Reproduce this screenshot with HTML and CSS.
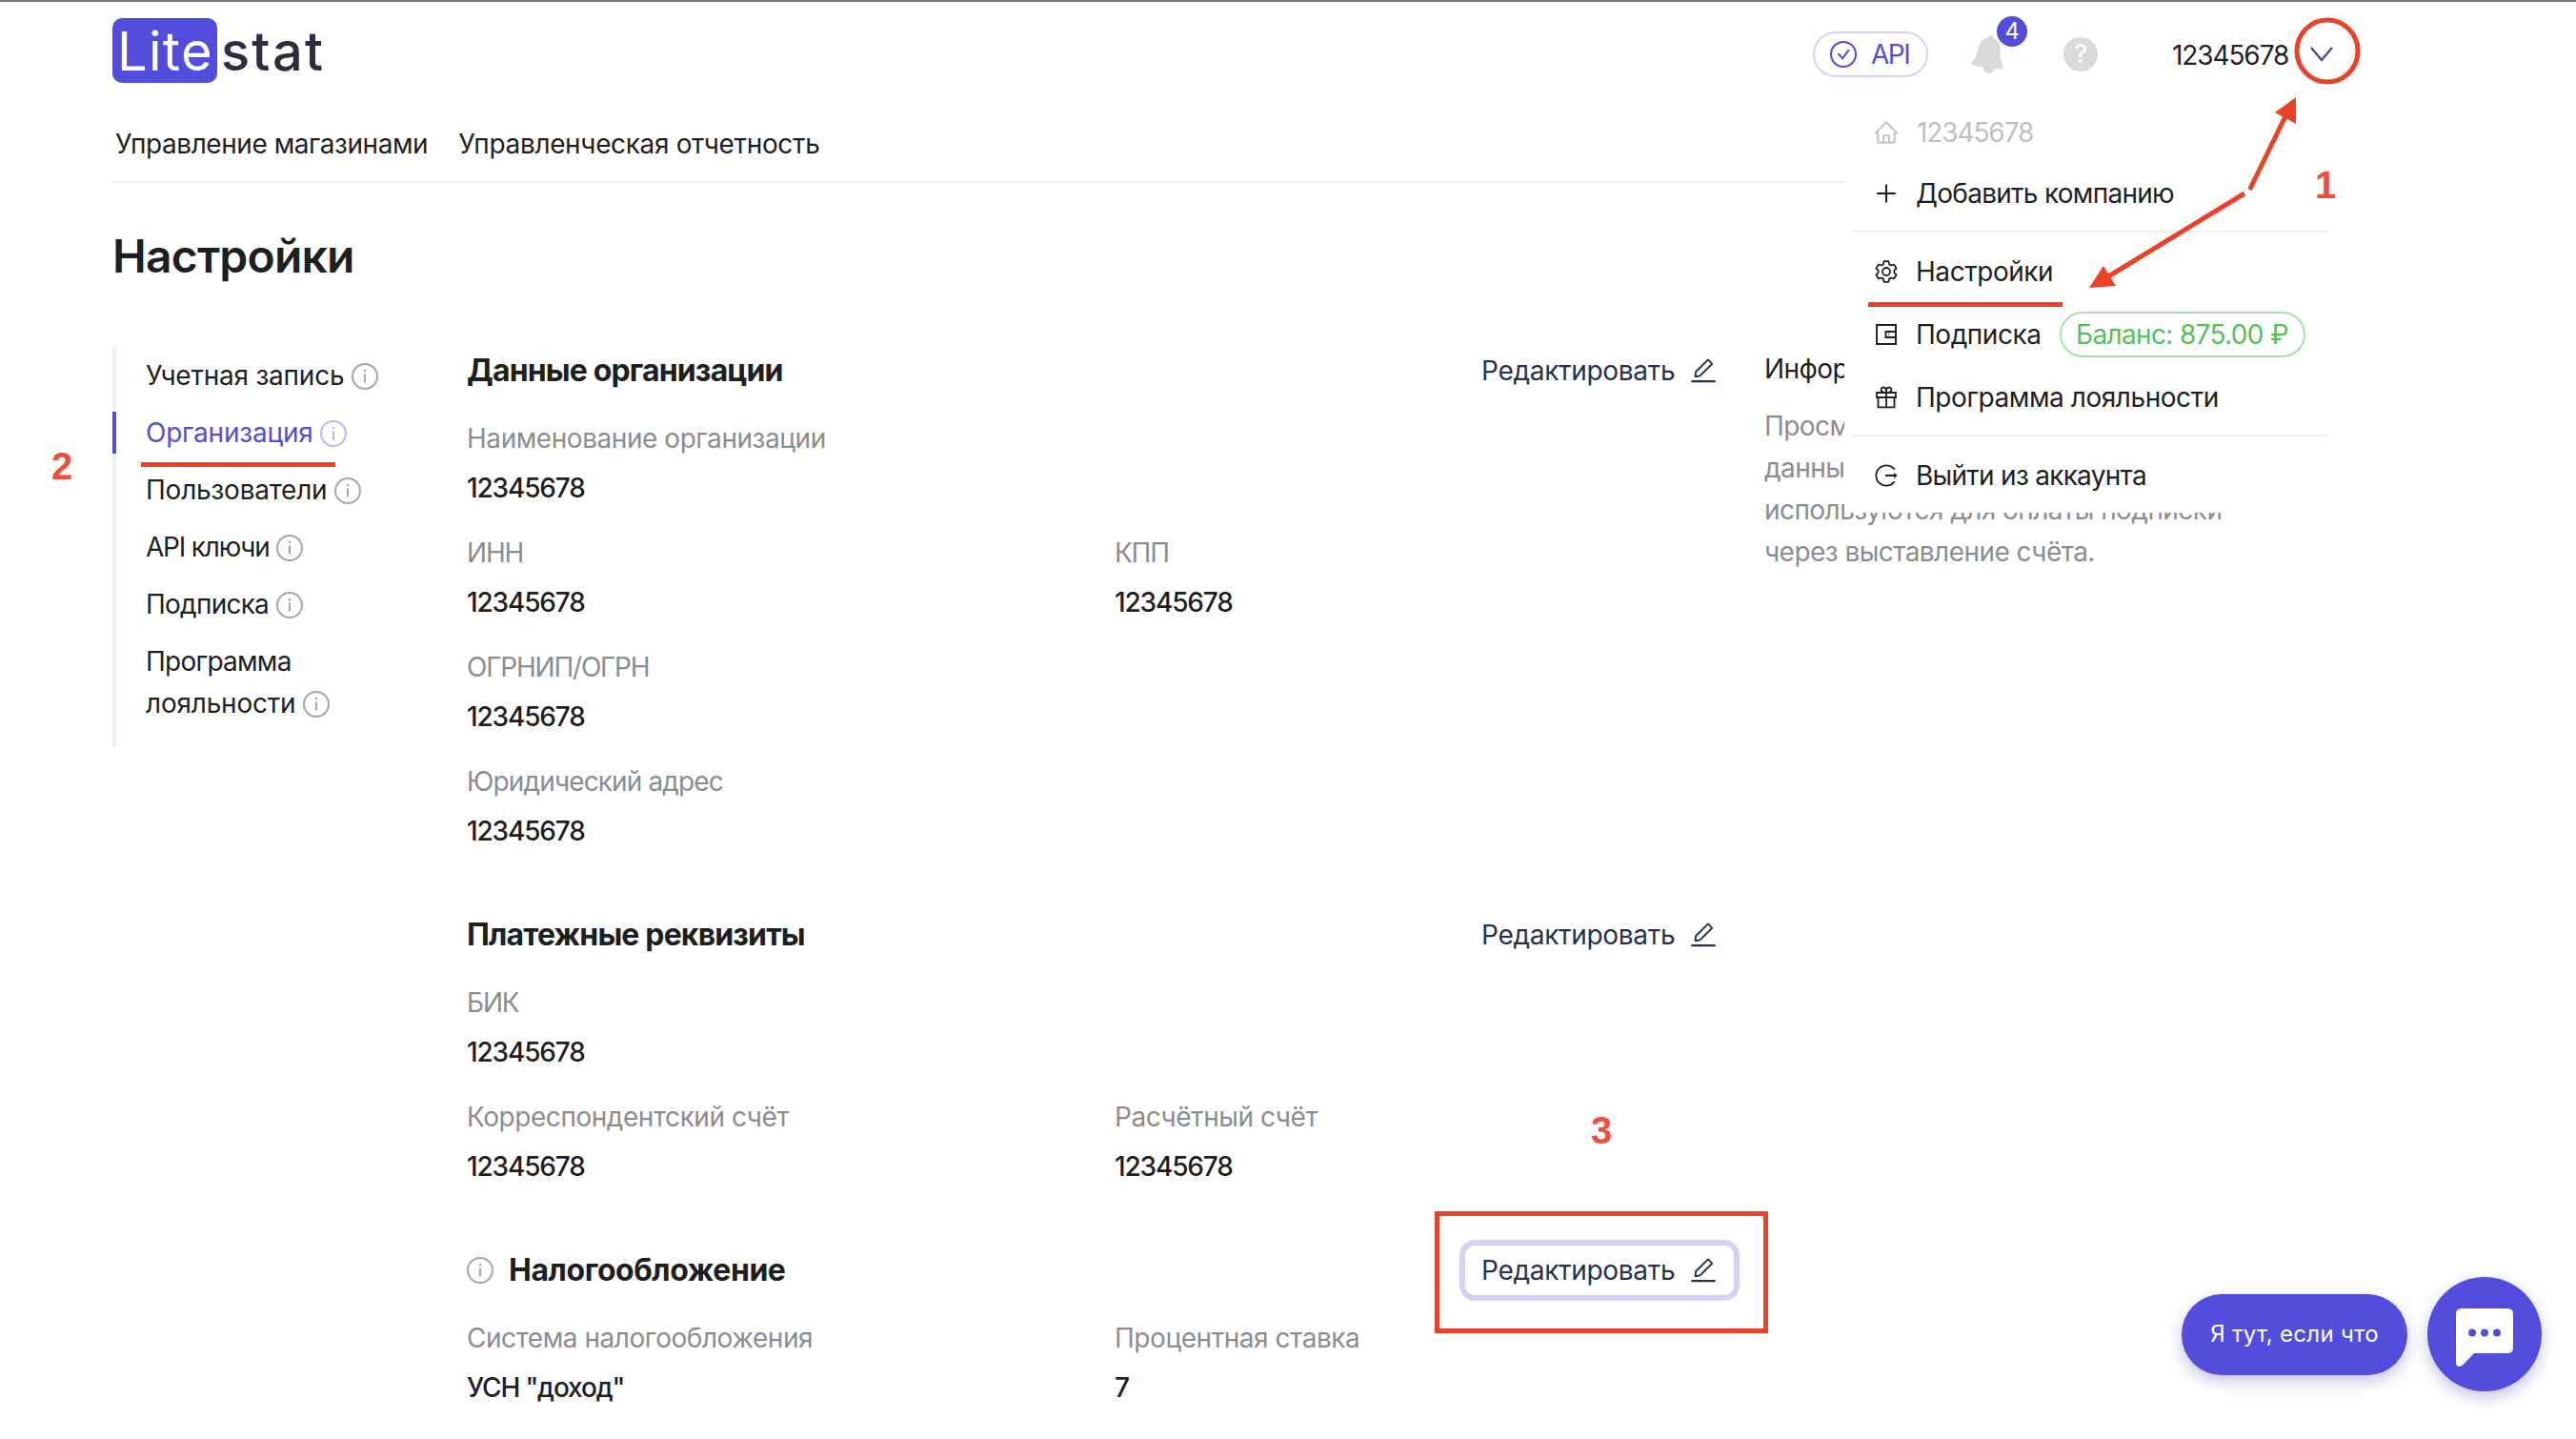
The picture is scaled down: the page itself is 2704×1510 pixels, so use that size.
FILE: index.html
```html
<!DOCTYPE html>
<html lang="ru">
<head>
    <meta charset="utf-8">
    <title>Настройки</title>
    <link rel="stylesheet" href="styles.css">
</head>
<body>
    <svg class="sprite">
        <symbol id="info" viewBox="0 0 28 28">
            <circle cx="14" cy="14" r="13" fill="none" stroke="currentColor" stroke-width="2"/>
            <path d="M14 11.5V20.5" stroke="currentColor" stroke-width="2"/>
            <circle cx="14" cy="8" r="1.3" fill="currentColor"/>
        </symbol>
        <symbol id="edit" viewBox="0 0 26 26">
            <path d="M1.2 24.2H24.8" stroke="currentColor" stroke-width="2.2" stroke-linecap="round"/>
            <path d="M5 14.2L18 1.4L22.3 5.8L9.4 18.4L4.6 19.2Z" fill="none" stroke="currentColor" stroke-width="1.9" stroke-linejoin="round"/>
        </symbol>
    </svg>

    <header class="header">
        <div class="header-top">
            <div class="logo"><span class="logo-lite">Lite</span><span class="logo-stat">stat</span></div>
            <div class="header-right">
                <div class="api">
                    <svg class="api-icon" viewBox="0 0 28 28" fill="none" stroke="currentColor" stroke-width="2">
                        <circle cx="14" cy="14" r="13"/>
                        <path d="M8.6 13.2L13 18.3L20 9.2"/>
                    </svg>
                    <span>API</span>
                </div>
                <div class="bell">
                    <svg width="34" height="40" viewBox="0 0 34 40" fill="#d9d9d9">
                        <path d="M20.5 0.3C22.3 0.3 23.4 1.6 23.2 3.6C28.2 5.4 30.6 9.2 30.6 14.2C30.6 21 30.4 25.5 32.4 29.2C34 31.4 33.6 34.4 31.4 35.4C24 34.8 8.5 33.2 1.5 31.2C-0.4 29.8 0.3 27.4 2.2 26.4C5.6 24 6.3 18.5 8.2 11.8C9.6 6.8 13 3.5 17.8 3.1C18.1 1.3 19 0.3 20.5 0.3Z"/>
                        <path d="M12.5 33C12.6 37 15 40 18.6 40C22 40 24 37.5 24.8 34.5Z"/>
                    </svg>
                    <span class="badge">4</span>
                </div>
                <div class="help">?</div>
                <div class="user">12345678</div>
                <svg class="chevron" viewBox="0 0 24 16" fill="none" stroke="#45507d" stroke-width="2.4">
                    <path d="M1 1L12 14L23 1"/>
                </svg>
            </div>
        </div>
        <nav class="nav">
            <a>Управление магазинами</a>
            <a class="wide">Управленческая отчетность</a>
        </nav>
    </header>

    <main class="page">
        <h1>Настройки</h1>
        <div class="content">
            <aside class="sidebar">
                <a>Учетная запись <svg class="info"><use href="#info"/></svg></a>
                <a class="active">Организация <svg class="info"><use href="#info"/></svg></a>
                <a>Пользователи <svg class="info"><use href="#info"/></svg></a>
                <a><span class="narrow">API ключи</span> <svg class="info"><use href="#info"/></svg></a>
                <a><span class="snug">Подписка</span> <svg class="info"><use href="#info"/></svg></a>
                <a><span class="snug">Программа</span><br>лояльности <svg class="info"><use href="#info"/></svg></a>
            </aside>

            <div class="sections">
                <section>
                    <div class="section-head">
                        <h2>Данные организации</h2>
                        <button class="edit">Редактировать <svg><use href="#edit"/></svg></button>
                    </div>
                    <div class="fields">
                        <div class="field full"><label>Наименование организации</label><b>12345678</b></div>
                        <div class="field"><label class="caps">ИНН</label><b>12345678</b></div>
                        <div class="field"><label class="caps">КПП</label><b>12345678</b></div>
                        <div class="field full"><label class="caps">ОГРНИП/ОГРН</label><b>12345678</b></div>
                        <div class="field full"><label class="snug">Юридический адрес</label><b>12345678</b></div>
                    </div>
                </section>

                <section>
                    <div class="section-head">
                        <h2>Платежные реквизиты</h2>
                        <button class="edit">Редактировать <svg><use href="#edit"/></svg></button>
                    </div>
                    <div class="fields">
                        <div class="field full"><label class="caps">БИК</label><b>12345678</b></div>
                        <div class="field"><label>Корреспондентский счёт</label><b>12345678</b></div>
                        <div class="field"><label>Расчётный счёт</label><b>12345678</b></div>
                    </div>
                </section>

                <section>
                    <div class="section-head">
                        <svg class="info head-info"><use href="#info"/></svg>
                        <h2 class="tax">Налогообложение</h2>
                        <button class="edit focused">Редактировать <svg><use href="#edit"/></svg></button>
                    </div>
                    <div class="fields">
                        <div class="field"><label>Система налогообложения</label><b>УСН "доход"</b></div>
                        <div class="field"><label>Процентная ставка</label><b>7</b></div>
                    </div>
                </section>
            </div>

            <div class="hint">
                <h3>Информация</h3>
                <p>Просмотр<br>данных<br>используются для оплаты подписки<br>через выставление счёта.</p>
            </div>
        </div>
    </main>

    <div class="menu">
        <a class="item company">
            <svg viewBox="0 0 24 24" fill="none" stroke="currentColor" stroke-width="1.8">
                <path d="M3.3 12.2V22.6H20.7V12.2M0.6 12.6L12 1.3L23.4 12.6H20.7M0.6 12.6H3.3M9.2 22.6V15.2H14.8V22.6"/>
            </svg>
            <span class="num">12345678</span>
        </a>
        <a class="item company">
            <svg viewBox="0 0 24 24" fill="none" stroke="currentColor" stroke-width="2">
                <path d="M12 2.5V21.5M2.2 12H21.8"/>
            </svg>
            <span class="tight">Добавить компанию</span>
        </a>
        <hr>
        <a class="item">
            <svg viewBox="0 0 24 24" fill="none" stroke="currentColor" stroke-width="1.8" stroke-linejoin="round">
                <path d="M9.6 1.2H14.4L15.1 4.4L17.1 5.5L20.2 4.6L22.6 8.7L20.3 10.9V13.1L22.6 15.3L20.2 19.4L17.1 18.5L15.1 19.6L14.4 22.8H9.6L8.9 19.6L6.9 18.5L3.8 19.4L1.4 15.3L3.7 13.1V10.9L1.4 8.7L3.8 4.6L6.9 5.5L8.9 4.4Z"/>
                <circle cx="12" cy="12" r="4"/>
            </svg>
            <span>Настройки</span>
        </a>
        <a class="item">
            <svg viewBox="0 0 24 24" fill="none" stroke="currentColor" stroke-width="1.9">
                <path d="M2 2H22V22H2ZM22 9H11.5V15H22"/>
                <circle cx="14.8" cy="12" r="0.8" fill="currentColor" stroke="none"/>
            </svg>
            <span>Подписка</span>
            <span class="balance">Баланс: 875.00 ₽</span>
        </a>
        <a class="item">
            <svg viewBox="0 0 24 24" fill="none" stroke="currentColor" stroke-width="1.8">
                <path d="M2 7H22V12H2ZM3.5 12V22.3H20.5V12M12 7V22.3M12 7C7.5 7 6.6 5.4 6.6 4C6.6 0.3 12 0.8 12 4.8V7C16.5 7 17.4 5.4 17.4 4C17.4 0.3 12 0.8 12 4.8"/>
            </svg>
            <span>Программа лояльности</span>
        </a>
        <hr class="low">
        <a class="item">
            <svg viewBox="0 0 24 24" fill="none" stroke="currentColor" stroke-width="1.8">
                <path d="M20.6 5.6A10.7 10.7 0 1 0 20.6 18.4M11 12H21.5"/>
                <path d="M20 9L23.8 12L20 15Z" fill="currentColor" stroke="none"/>
            </svg>
            <span class="tight">Выйти из аккаунта</span>
        </a>
    </div>

    <!-- step markers -->
    <svg class="marks" viewBox="0 0 2704 1510" fill="none" stroke="#eb4127" stroke-width="5">
        <ellipse cx="2443" cy="53.5" rx="32" ry="32.5"/>
        <path d="M2361.5 199L2400 120M2356 203L2210 292"/>
        <path d="M2410 102V130L2388 118ZM2193 302L2208 279L2221 300Z" fill="#eb4127" stroke="none"/>
        <path d="M1961 319.5H2165M148 487.5H352"/>
        <rect x="1508.5" y="1273.5" width="345" height="123"/>
    </svg>
    <span class="step step-1">1</span>
    <span class="step step-2">2</span>
    <span class="step step-3">3</span>

    <div class="chat">
        <div class="chat-text">Я тут, если что</div>
        <div class="chat-button">
            <svg width="60" height="62" viewBox="0 0 60 62">
                <path d="M6 0H54Q60 0 60 6V41Q60 47 54 47H19L7 59.5Q0 63.5 0 56V6Q0 0 6 0Z" fill="#fff"/>
                <g fill="#524ddd"><circle cx="17" cy="25.5" r="4"/><circle cx="30" cy="25.5" r="4"/><circle cx="43" cy="25.5" r="4"/></g>
            </svg>
        </div>
    </div>
</body>
</html>
```

FILE: styles.css
```css
* {
    box-sizing: border-box;
}
body {
    margin: 0;
    height: 1510px;
    overflow: hidden;
    position: relative;
    border-top: 2px solid #6f7a83;
    background: #fff;
    color: #1f1f1f;
    font-family: Inter, "Noto Sans", sans-serif;
    font-size: 28px;
    line-height: 44px;
    letter-spacing: -0.45px;
}
svg {
    flex-shrink: 0;
}
.sprite {
    display: none;
}

/* Header */
.header {
    margin: 0 252px 0 118px;
    border-bottom: 2px solid #f0f0f0;
}
.header-top {
    display: flex;
    justify-content: space-between;
    align-items: center;
    height: 110px;
}
.logo {
    display: flex;
    align-items: center;
    margin-bottom: 8px;
    font-size: 56px;
    line-height: 70px;
    color: #2f2e41;
}
.logo-lite {
    width: 110px;
    height: 68px;
    padding-left: 5px;
    border-radius: 10px;
    background: #524ddd;
    color: #fff;
    letter-spacing: 1.3px;
}
.logo-stat {
    padding: 2px 0 0 4px;
    font-weight: 500;
    letter-spacing: 2.2px;
}
.header-right {
    display: flex;
    align-items: center;
}
.api {
    display: flex;
    align-items: center;
    gap: 15px;
    width: 121px;
    height: 48px;
    padding-left: 16px;
    border: 2px solid #d6d0fa;
    border-radius: 24px;
    color: #524ddd;
    line-height: 46px;
    letter-spacing: -1.5px;
}
.api-icon {
    width: 28px;
    height: 28px;
}
.bell {
    position: relative;
    width: 34px;
    height: 40px;
    margin-left: 45px;
}
.bell svg {
    display: block;
}
.badge {
    position: absolute;
    left: 27px;
    top: -20px;
    width: 32px;
    height: 32px;
    border-radius: 50%;
    background: #524ddd;
    color: #fff;
    font-size: 24px;
    line-height: 32px;
    text-align: center;
}
.help {
    width: 36px;
    height: 36px;
    margin: 0 78px 0 63px;
    border-radius: 50%;
    background: #d9d9d9;
    color: #fff;
    font-size: 27px;
    font-weight: 500;
    line-height: 36px;
    text-align: center;
}
.user {
    width: 125px;
    padding-top: 1px;
    letter-spacing: -1.1px;
}
.chevron {
    width: 24px;
    height: 16px;
    margin-left: 20px;
    margin-right: 3px;
}
.nav {
    display: flex;
    gap: 32px;
    padding: 17px 0 17px 3px;
}
.nav .wide {
    letter-spacing: -0.35px;
}

/* Page */
.page {
    margin: 47px 0 0 118px;
}
h1 {
    margin: 0 0 66px;
    font-size: 48px;
    line-height: 60px;
    font-weight: 600;
    letter-spacing: -0.8px;
}
.content {
    display: grid;
    grid-template-columns: 372px 1336px 1fr;
    align-items: start;
}
.sidebar {
    display: flex;
    flex-direction: column;
    gap: 16px;
    width: 300px;
    margin-top: -1px;
    padding: 8px 0 24px;
    box-shadow: inset 4px 0 #f0f0f0;
    letter-spacing: -0.22px;
}
.sidebar a {
    padding-left: 35px;
    line-height: 44px;
}
.sidebar .active {
    box-shadow: inset 4px 0 #524ddd;
    color: #524ddd;
}
.info {
    width: 28px;
    height: 28px;
    color: #a6a6a6;
    vertical-align: -5px;
}
.active .info {
    color: #bab8f1;
}
.narrow {
    letter-spacing: -1.2px;
}
.snug {
    letter-spacing: -0.75px;
}
.sections {
    display: grid;
    gap: 63px;
}
.section-head {
    display: flex;
    align-items: center;
    height: 48px;
    margin-bottom: 25px;
}
h2 {
    margin: 0;
    font-size: 32px;
    line-height: 48px;
    font-weight: 700;
    letter-spacing: -0.85px;
}
.tax {
    letter-spacing: -0.45px;
}
.head-info {
    margin-right: 16px;
    color: #a3a6b5;
}
.edit {
    display: flex;
    align-items: center;
    justify-content: space-between;
    width: 294px;
    height: 64px;
    margin: -8px 0 -8px auto;
    padding: 0 19px 0 17px;
    border: 6px solid transparent;
    border-radius: 16px;
    background: none;
    color: #28304a;
    font: inherit;
    letter-spacing: -0.3px;
}
.edit svg {
    width: 26px;
    height: 26px;
}
.focused {
    border-color: #d6d0fa;
}
.fields {
    display: grid;
    grid-template-columns: 656px 656px;
    gap: 24px;
}
.full {
    grid-column: 1 / -1;
}
.field {
    display: flex;
    flex-direction: column;
    gap: 8px;
}
.field label {
    color: #8c8c8c;
    letter-spacing: -0.45px;
}
.field .caps {
    letter-spacing: -1.2px;
}
.field .snug {
    letter-spacing: -0.87px;
}
.field b {
    font-weight: 500;
    letter-spacing: -1.15px;
}
.hint {
    padding: 0 0 0 26px;
    letter-spacing: -0.55px;
    white-space: nowrap;
}
.hint h3 {
    margin: 0 0 16px;
    font-size: 28px;
    font-weight: 400;
}
.hint p {
    margin: 0;
    color: #8c8c8c;
}

/* Account menu */
.menu {
    position: absolute;
    left: 1936px;
    top: 105px;
    width: 516px;
    height: 431px;
    padding: 0 8px;
    background: #fff;
}
.menu hr {
    height: 2px;
    margin: 7px 0 8px;
    border: 0;
    background: #f0f0f0;
}
.menu .low {
    margin-top: 6px;
}
.item {
    display: flex;
    align-items: center;
    height: 66px;
    padding-left: 24px;
}
.company {
    height: 64px;
}
.company:first-child {
    color: #bfbfbf;
}
.item svg {
    width: 24px;
    height: 24px;
    margin-right: 19px;
}
.num {
    padding-left: 1px;
    letter-spacing: -1.1px;
}
.tight {
    letter-spacing: -0.72px;
}
.balance {
    width: 258px;
    height: 48px;
    margin-left: 19px;
    border: 2px solid #a3e4a6;
    border-radius: 24px;
    color: #56bf56;
    text-align: center;
    letter-spacing: -0.66px;
}

/* Step markers */
.marks {
    position: absolute;
    left: 0;
    top: -2px;
    width: 2704px;
    height: 1510px;
}
.step {
    position: absolute;
    color: #f04e3e;
    font-family: "Liberation Sans", sans-serif;
    font-size: 40px;
    font-weight: 700;
    letter-spacing: 0;
}
.step-1 {
    left: 2430px;
    top: 170px;
}
.step-2 {
    left: 54px;
    top: 465px;
}
.step-3 {
    left: 1670px;
    top: 1162px;
}

/* Chat widget */
.chat {
    position: absolute;
    right: 36px;
    bottom: 50px;
    display: flex;
    align-items: center;
    gap: 21px;
}
.chat-text {
    width: 237px;
    height: 85px;
    border-radius: 42px;
    background: #524ddd;
    box-shadow: 0 6px 16px rgba(60, 50, 160, 0.3);
    color: #fff;
    font-size: 24px;
    line-height: 84px;
    letter-spacing: 0.28px;
    text-align: center;
}
.chat-button {
    display: flex;
    align-items: center;
    justify-content: center;
    width: 120px;
    height: 120px;
    padding-top: 8px;
    border-radius: 50%;
    background: #524ddd;
    box-shadow: 0 6px 16px rgba(60, 50, 160, 0.3);
}
```
